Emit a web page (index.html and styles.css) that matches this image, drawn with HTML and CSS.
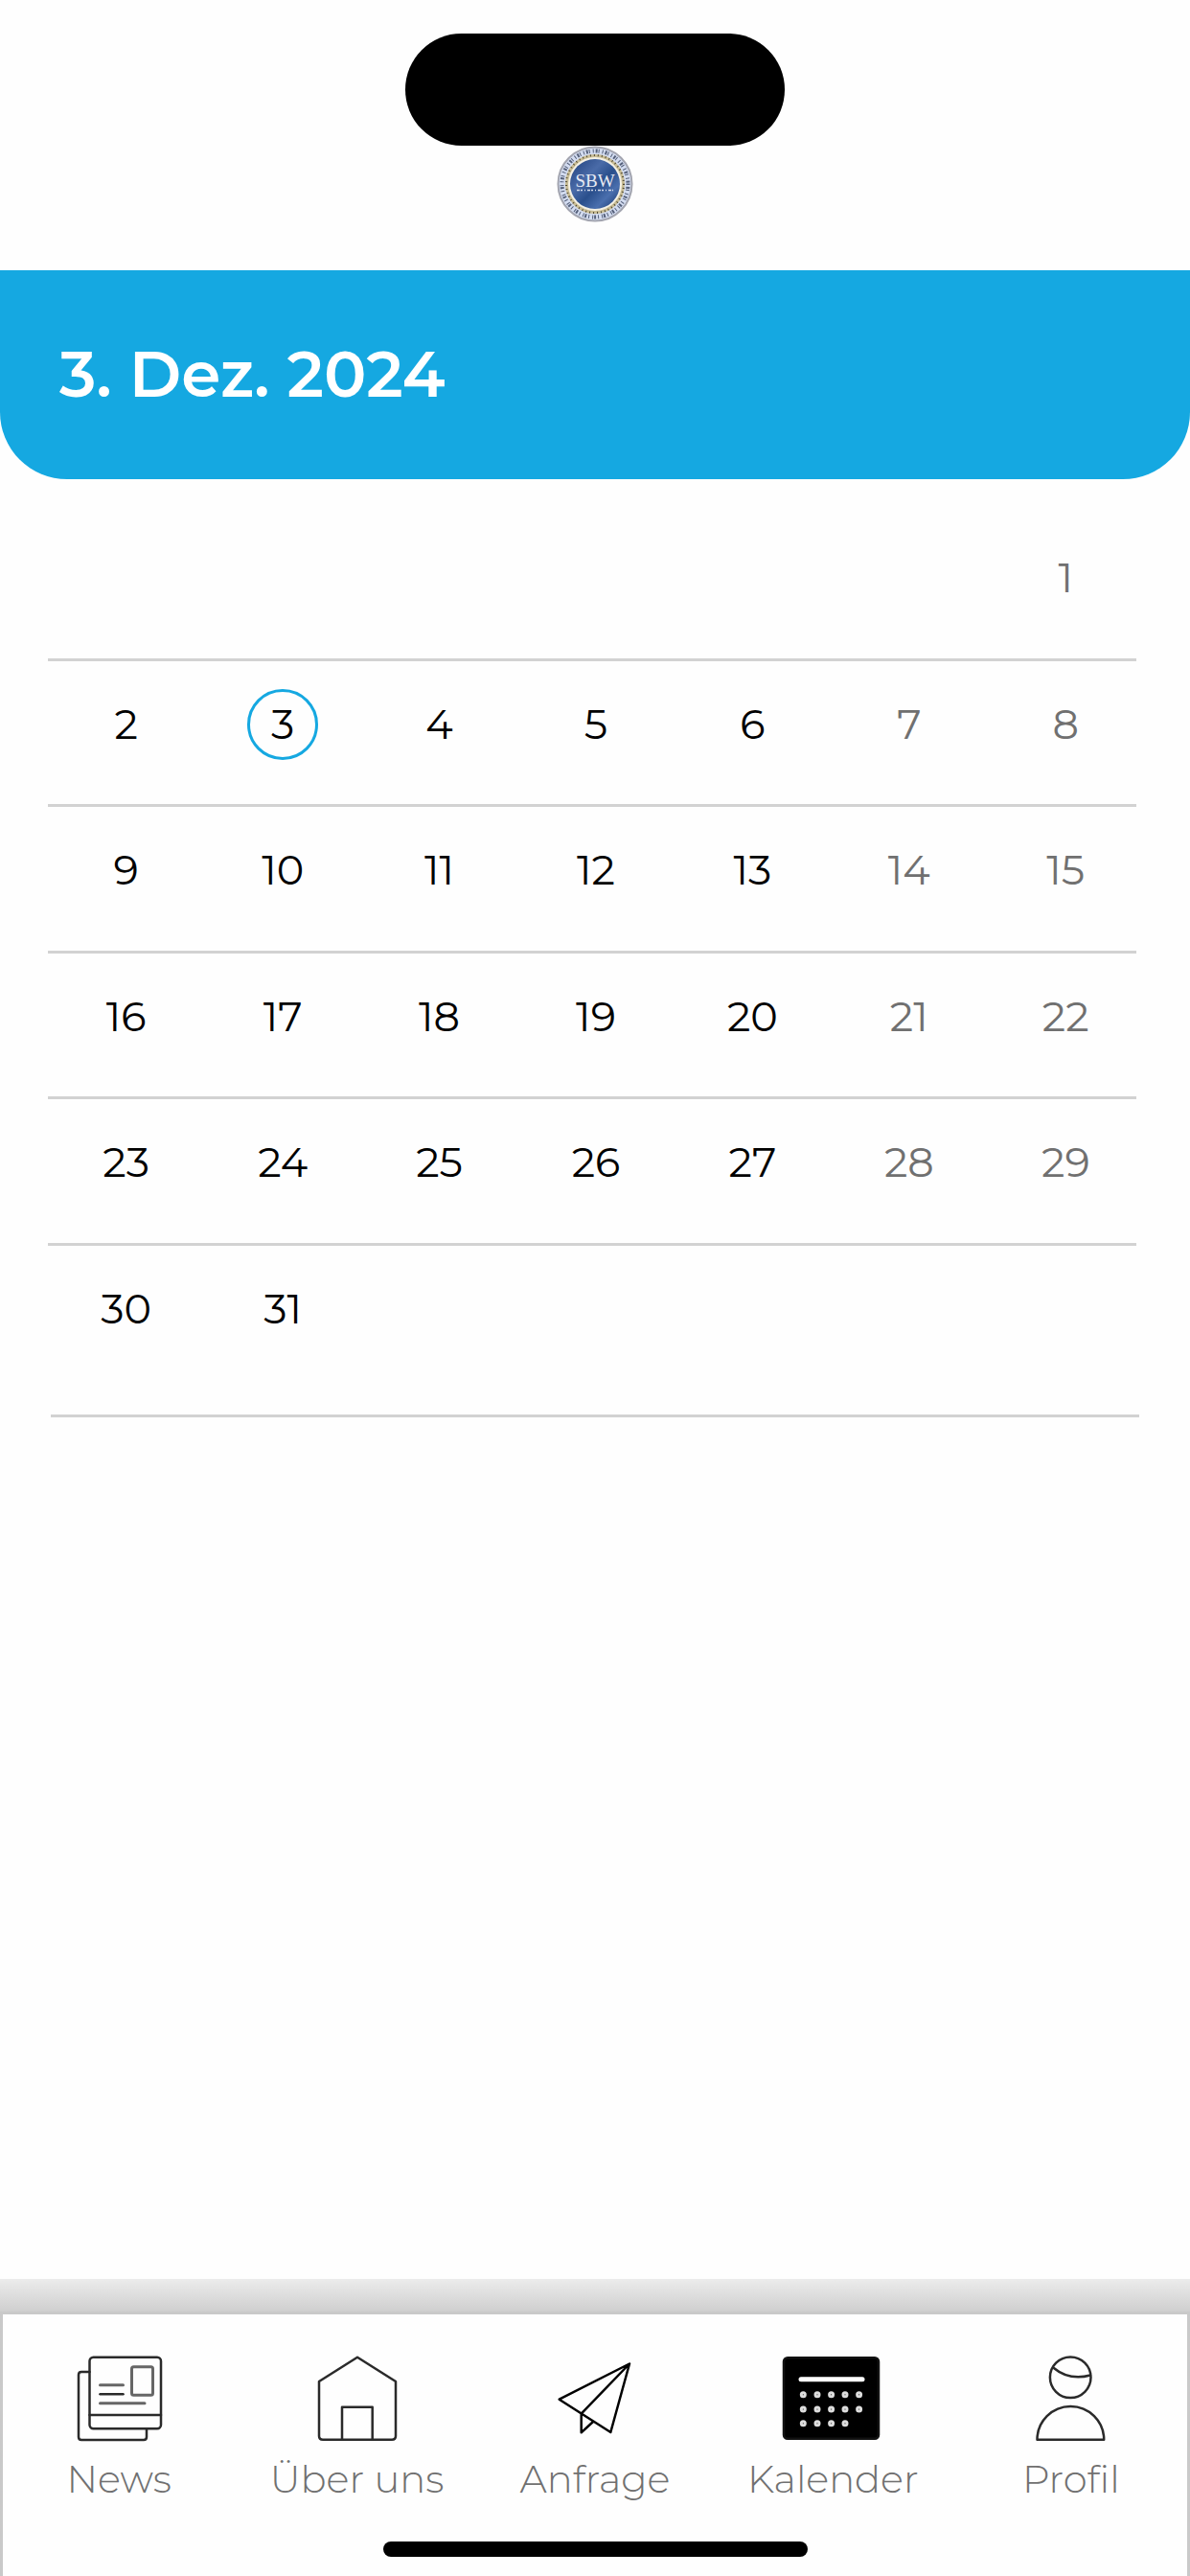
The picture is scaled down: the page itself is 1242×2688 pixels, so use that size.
FILE: index.html
```
<!DOCTYPE html>
<html lang="de">

<head>
    <meta charset="UTF-8">
    <meta name="viewport" content="width=device-width, initial-scale=1.0">
    <title>Kalender</title>
    <link rel="stylesheet" href="styles.css">
</head>

<body>
    <header class="top-bar">
        <div class="island"></div>
        <svg class="logo" viewBox="0 0 80 80" role="img" aria-label="SBW">
            <defs>
                <linearGradient id="disc" x1="0" y1="0" x2="1" y2="1">
                    <stop offset="0" stop-color="#1d3f7c" />
                    <stop offset="0.35" stop-color="#4a6ba8" />
                    <stop offset="0.55" stop-color="#2a4f8c" />
                    <stop offset="0.75" stop-color="#4a6fae" />
                    <stop offset="1" stop-color="#16356c" />
                </linearGradient>
            </defs>
            <circle cx="40" cy="40" r="38.5" fill="#d3dcf0" stroke="#a3a5b0" stroke-width="2" />
            <circle cx="40" cy="40" r="34.5" fill="none" stroke="#56617b" stroke-width="4" stroke-dasharray="1 2 2 1 1 3" />
            <circle cx="40" cy="40" r="29.5" fill="#f4f1e6" stroke="#c9bd95" stroke-width="3" />
            <circle cx="40" cy="40" r="30" fill="none" stroke="#4c4633" stroke-width="2" stroke-dasharray="1 3" />
            <circle cx="40" cy="40" r="26" fill="url(#disc)" />
            <text class="logo-text" x="40" y="43" text-anchor="middle">SBW</text>
            <path d="M21 46.500h38" stroke="#d5dcec" stroke-width="1.500" stroke-dasharray="3 1 2 2 1 2" />
        </svg>
    </header>

    <div class="date-banner">
        <h1>3. Dez. 2024</h1>
    </div>

    <main class="calendar">
        <table class="month" aria-label="Dezember 2024">
            <tbody>
                <tr>
                    <td></td>
                    <td></td>
                    <td></td>
                    <td></td>
                    <td></td>
                    <td></td>
                    <td><button class="day weekend">1</button></td>
                </tr>
                <tr>
                    <td><button class="day">2</button></td>
                    <td><button class="day today">3</button></td>
                    <td><button class="day">4</button></td>
                    <td><button class="day">5</button></td>
                    <td><button class="day">6</button></td>
                    <td><button class="day weekend">7</button></td>
                    <td><button class="day weekend">8</button></td>
                </tr>
                <tr>
                    <td><button class="day">9</button></td>
                    <td><button class="day">10</button></td>
                    <td><button class="day">11</button></td>
                    <td><button class="day">12</button></td>
                    <td><button class="day">13</button></td>
                    <td><button class="day weekend">14</button></td>
                    <td><button class="day weekend">15</button></td>
                </tr>
                <tr>
                    <td><button class="day">16</button></td>
                    <td><button class="day">17</button></td>
                    <td><button class="day">18</button></td>
                    <td><button class="day">19</button></td>
                    <td><button class="day">20</button></td>
                    <td><button class="day weekend">21</button></td>
                    <td><button class="day weekend">22</button></td>
                </tr>
                <tr>
                    <td><button class="day">23</button></td>
                    <td><button class="day">24</button></td>
                    <td><button class="day">25</button></td>
                    <td><button class="day">26</button></td>
                    <td><button class="day">27</button></td>
                    <td><button class="day weekend">28</button></td>
                    <td><button class="day weekend">29</button></td>
                </tr>
                <tr>
                    <td><button class="day">30</button></td>
                    <td><button class="day">31</button></td>
                    <td></td>
                    <td></td>
                    <td></td>
                    <td></td>
                    <td></td>
                </tr>
            </tbody>
        </table>
        <hr class="divider">
    </main>

    <footer class="bottom">
        <div class="shade"></div>
        <div class="tab-bar">
            <nav class="tabs">
                <a class="tab" href="#news">
                    <svg class="icon" viewBox="0 0 108 92">
                        <path d="M23.5 18H15q-3 0-3 3v65q0 3 3 3h65q3 0 3-3V77.5" />
                        <rect x="23.5" y="2.7" width="74.5" height="74.6" rx="4" />
                        <path d="M23.5 63H98" />
                        <g class="soft">
                            <rect x="67.5" y="12.7" width="22" height="29.6" rx="2" />
                            <path d="M34.5 31.7h24M34.5 50.7H81" />
                        </g>
                        <path d="M34.5 41.3h24" />
                    </svg>
                    <span>News</span>
                </a>
                <a class="tab" href="#ueber-uns">
                    <svg class="icon" viewBox="0 0 108 92">
                        <path d="M54 2.7L94 28v57q0 3.7-4 3.7H18q-4 0-4-3.7V28z" />
                        <path d="M38 88.7v-34h31.7v34" />
                    </svg>
                    <span>Über uns</span>
                </a>
                <a class="tab" href="#anfrage">
                    <svg class="icon plane" viewBox="0 0 108 92">
                        <path d="M90 9.5L16.7 46.7 70.3 81zL39.7 61.7V81.3L52 70" />
                    </svg>
                    <span>Anfrage</span>
                </a>
                <a class="tab" href="#kalender" aria-current="page">
                    <svg class="icon" viewBox="0 0 108 92">
                        <rect class="solid" x="3" y="3.3" width="99" height="84.5" rx="4" />
                        <path class="bar" d="M21 25.7h64" />
                        <g class="dots">
                            <circle cx="23.3" cy="41.7" r="2" />
                            <circle cx="38" cy="41.7" r="2" />
                            <circle cx="52.6" cy="41.7" r="2" />
                            <circle cx="67" cy="41.7" r="2" />
                            <circle cx="81.6" cy="41.7" r="2" />
                            <circle cx="23.3" cy="57" r="2" />
                            <circle cx="38" cy="57" r="2" />
                            <circle cx="52.6" cy="57" r="2" />
                            <circle cx="67" cy="57" r="2" />
                            <circle cx="81.6" cy="57" r="2" />
                            <circle cx="23.3" cy="71.7" r="2" />
                            <circle cx="38" cy="71.7" r="2" />
                            <circle cx="52.6" cy="71.7" r="2" />
                            <circle cx="67" cy="71.7" r="2" />
                        </g>
                    </svg>
                    <span>Kalender</span>
                </a>
                <a class="tab" href="#profil">
                    <svg class="icon" viewBox="0 0 108 92">
                        <circle cx="53.2" cy="23.7" r="21.3" />
                        <path d="M35.5 13.7Q52 27.5 74 21.5" />
                        <path d="M18.5 88.7a34.8 34.7 0 0 1 69.7 0z" />
                    </svg>
                    <span>Profil</span>
                </a>
            </nav>
            <div class="home-indicator"></div>
        </div>
    </footer>
</body>

</html>
```
FILE: styles.css
```
* {
    box-sizing: border-box;
}

body {
    margin: 0;
    min-height: 100vh;
    display: flex;
    flex-direction: column;
    background-color: #fefefe;
    font-family: 'Montserrat', 'Inter', sans-serif;
}

.top-bar {
    display: flex;
    flex-direction: column;
    align-items: center;
    padding: 35px 0 50px;
}

.island {
    width: 396px;
    height: 117px;
    border-radius: 59px;
    background-color: #000;
}

.logo {
    width: 80px;
    height: 80px;
}

.logo-text {
    font-family: 'Liberation Serif', serif;
    font-size: 19px;
    fill: #e6eaf3;
}

.date-banner {
    display: flex;
    align-items: center;
    height: 218px;
    padding: 0 62px;
    border-radius: 0 0 70px 70px;
    background-color: #15a8e1;
    color: #fff;
}

.date-banner h1 {
    margin: 0;
    font-size: 66px;
    font-weight: 600;
    line-height: 80px;
}

.calendar {
    padding: 37px 48px 0 50px;
}

.month {
    width: 100%;
    height: 915px;
    table-layout: fixed;
    border-collapse: collapse;
}

/* row line stops a little before the last column ends */
.month tr {
    background: linear-gradient(#d2d2d2, #d2d2d2) left bottom / calc(100% - 8px) 3px no-repeat;
}

.month tr:last-child {
    background: none;
}

.month td {
    padding: 29px 0 0;
    text-align: center;
    vertical-align: top;
}

.day {
    display: block;
    width: 74px;
    height: 74px;
    margin: 0 auto;
    padding: 0;
    border: 3px solid transparent;
    border-radius: 50%;
    background: none;
    color: #000;
    font-family: inherit;
    font-size: 43px;
    font-weight: 400;
    line-height: 68px;
    cursor: pointer;
}

.weekend {
    color: #707070;
}

.today {
    border-color: #15a8e1;
}

.divider {
    height: 3px;
    margin: 24px 5px 0 3px;
    border: none;
    background-color: #d2d2d2;
}

.bottom {
    margin-top: auto;
}

.shade {
    height: 34px;
    background: linear-gradient(#ececec, #cfcfcf);
}

.tab-bar {
    padding: 42px 0 20px;
    border: solid #c9c9c9;
    border-width: 3px 3px 0;
}

/* columns run the full window width, under the side borders */
.tabs {
    display: grid;
    grid-template-columns: repeat(5, 1fr);
    margin: 0 -3px;
}

.tab {
    display: flex;
    flex-direction: column;
    align-items: center;
    gap: 14px;
    color: #707070;
    font-size: 40px;
    font-weight: 300;
    line-height: 48px;
    text-decoration: none;
    white-space: nowrap;
}

.icon {
    width: 108px;
    height: 92px;
    fill: none;
    stroke: #2a2a2a;
    stroke-width: 2.5;
    stroke-linecap: round;
    stroke-linejoin: round;
}

.soft {
    stroke: #666;
    stroke-width: 3;
}

.plane {
    stroke: #000;
}

.solid {
    fill: #000;
    stroke: #111;
}

.bar {
    stroke: #fff;
    stroke-width: 5;
}

.dots {
    stroke: #ddd;
    stroke-width: 3;
}

.home-indicator {
    width: 443px;
    height: 16px;
    margin: 41px auto 0;
    border-radius: 8px;
    background-color: #000;
}
```
